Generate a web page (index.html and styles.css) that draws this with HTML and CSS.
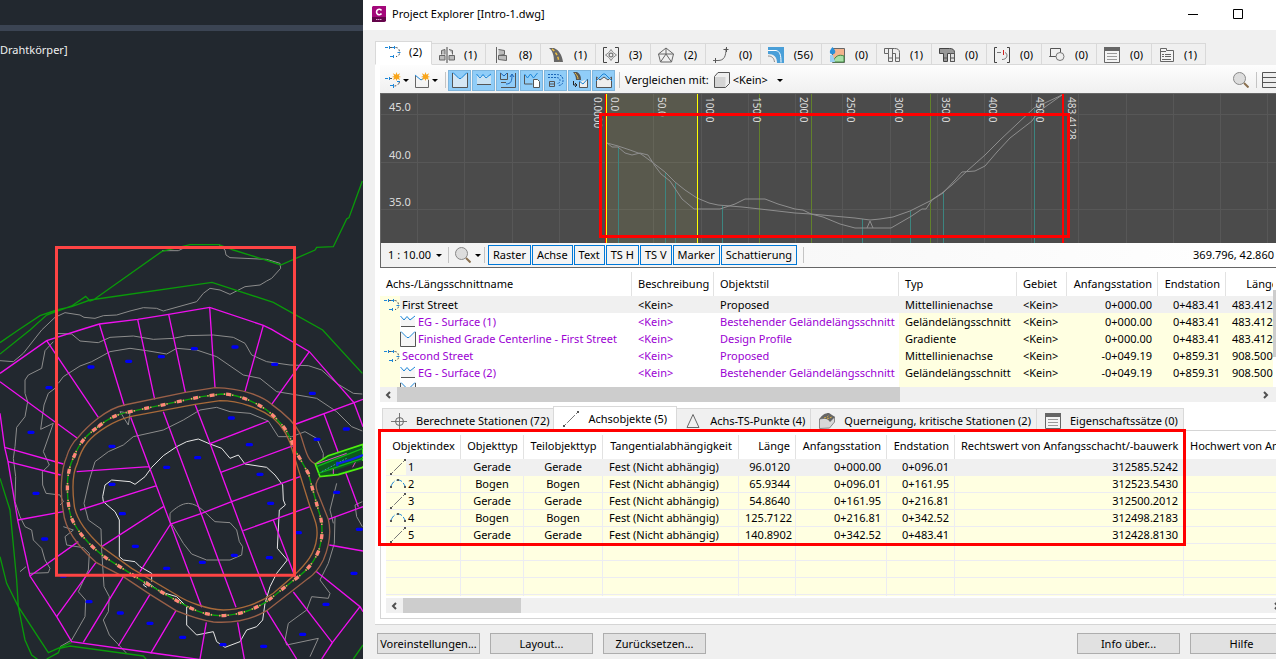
FILE: index.html
```html
<!DOCTYPE html>
<html lang="de">
<head>
<meta charset="utf-8">
<title>Project Explorer [Intro-1.dwg]</title>
<link rel="stylesheet" href="styles.css">
</head>
<body>
<svg class="sprite" aria-hidden="true">
  <symbol id="i-align" viewBox="0 0 16 16"><path d="M0 3.500h3M7 3.500h2M4.500 2v3M9.500 2v3" stroke="#1c86d8" fill="none"/><path d="M5 3.500h2M10.500 3.500c3 0 4 2 4 5s-1.500 4-3.500 4" stroke="#555" stroke-dasharray="2 2" fill="none"/><path d="M5 12.500h3M8.500 11v3M12.500 8.500h3" stroke="#1c86d8"/></symbol>
  <symbol id="i-assembly" viewBox="0 0 16 16"><path d="M8 0v16" stroke="#444"/><path d="M2.500 7.500V3.500l3.500-1v5M.5 8.500h5.500v4.500H.5zM10 2.500l3.500 1v4M10 8.500h5.500V13H10z" fill="#bbb" stroke="#666"/></symbol>
  <symbol id="i-sub" viewBox="0 0 16 16"><path d="M3.500 0v16" stroke="#666"/><path d="M5.500 2.500l6 1v4l-6 1M5.500 8.500h8v5l-8-1z" fill="#bbb" stroke="#666"/></symbol>
  <symbol id="i-road" viewBox="0 0 16 16"><path d="M1 1h5c5 2 8 7 9 14H6C6 9 5 4 1 1z" fill="#666"/><path d="M4 2c4 3 6 7 7 13" stroke="#f0c040" stroke-width="1.500" stroke-dasharray="3 2" fill="none"/></symbol>
  <symbol id="i-inter" viewBox="0 0 16 16"><path d="M4 .5H.5v15H4M12 .5h3.500v15H12" fill="none" stroke="#444"/><path d="M8 2.500l2 3 3.500 2.500-3.500 2.500-2 3-2-3L2.500 8 6 5.500z" fill="none" stroke="#888"/><circle cx="8" cy="8" r="2" fill="none" stroke="#555"/></symbol>
  <symbol id="i-tin" viewBox="0 0 16 16"><path d="M8 1l7.500 6-2 8h-11L.5 7zM8 1v6L.5 7M8 7l7.500 0M8 7l-5.500 8M8 7l5.500 8" fill="none" stroke="#666"/></symbol>
  <symbol id="i-curve" viewBox="0 0 16 16"><path d="M0 13.500h5c6 0 8-4 8-12" fill="none" stroke="#666"/><path d="M2.500 11v5M10.500 2.500h5M13.500 0v5" stroke="#555"/></symbol>
  <symbol id="i-grade" viewBox="0 0 16 16"><path d="M0 0h16v16H9C9 10 6 7 0 7z" fill="#4a9fd8"/><path d="M0 3.500h8c4 1 5 4 5 12" fill="none" stroke="#fff"/><path d="M0 9c4 0 6 2 6.500 6" fill="none" stroke="#888"/></symbol>
  <symbol id="i-water" viewBox="0 0 16 16"><path d="M3.500 1.500h12v14h-12z" fill="#f4b48e" stroke="#666"/><path d="M4 15c2-6 6-8 11-6v6z" fill="#a8e0a8" stroke="#484"/><path d="M1 8h3l2 7H1z" fill="#9cd0f4"/><path d="M3.500 0C1 3 .5 4.500 1 6s4 2 5 0S6 3 3.500 0z" fill="#2a8fd8"/></symbol>
  <symbol id="i-pipe" viewBox="0 0 16 16"><path d="M.5 1.500h10c3 0 5 1 5 4v9h-4v-8H8.500v8H4.500v-8h-4z" fill="#eee" stroke="#666"/><path d="M4.500 1.500v5M8.500 2v5M11.500 11h4M4.500 11h4" stroke="#666"/></symbol>
  <symbol id="i-pipe2" viewBox="0 0 16 16"><path d="M.5 1.500h10c3 0 5 1 5 4v9h-4v-8H8.500v8H4.500v-8h-4z" fill="#999" stroke="#444"/><path d="M11.500 6.500h4v8h-4zM11.500 11h4M5 11h3.500" fill="#ddd" stroke="#555"/></symbol>
  <symbol id="i-bracket" viewBox="0 0 16 16"><path d="M3 .5H.5v15H3M13 .5h2.500v15H13" fill="none" stroke="#444"/><path d="M3 5.500h4M11 5.500c3 1 3 7-3 7" fill="none" stroke="#777"/><path d="M9.500 3v5" stroke="#d02020"/></symbol>
  <symbol id="i-shape" viewBox="0 0 16 16"><path d="M1.500 1.500h10v8h-11M.5 9.500h1v-8" fill="none" stroke="#555"/><circle cx="11" cy="9.500" r="4" fill="#eee" stroke="#777"/></symbol>
  <symbol id="i-list" viewBox="0 0 16 16"><path d="M.5.500h15v15H.5z" fill="#f4f4f4" stroke="#666"/><path d="M0 0h16v4H0z" fill="#666"/><path d="M3 6.500h10M3 9.500h10M3 12.500h10" stroke="#999"/></symbol>
  <symbol id="i-report" viewBox="0 0 16 16"><path d="M1.500 1.500h6v2h7v11h-13z" fill="#f4f4f4" stroke="#666"/><path d="M2 4.500h5M3 7.500h2M6 7.500h6M3 9.500h2M6 9.500h6M3 12.500h9" stroke="#666"/></symbol>
  <symbol id="i-star" viewBox="0 0 10 10"><path d="M5 0l1 3 3-1.500L7.500 4.500 10 5.500 7.500 6 9 9 6 7.500 5 10 4 7.500 1 9l1.500-3L0 5.500l2.500-1L1 1.500 4 3z" fill="#f9a51a"/></symbol>
  <symbol id="i-newalign" viewBox="0 0 16 16"><path d="M0 6.500h3M4.500 5v3" stroke="#1c86d8"/><path d="M5 6.500h2M14.500 10c-1 3-3 4-5 4" stroke="#555" stroke-dasharray="3 2" fill="none"/><path d="M5 13.500h3M8.500 12v4M12 9.500h3" stroke="#1c86d8"/><use href="#i-star" x="7" width="9" height="9"/></symbol>
  <symbol id="i-newprof" viewBox="0 0 16 16"><path d="M1.500 4v11.500h13V8" fill="none" stroke="#666"/><path d="M1 3l6 5 3-2" fill="none" stroke="#1c86d8"/><use href="#i-star" x="7" width="9" height="9"/></symbol>
  <symbol id="i-prof" viewBox="0 0 16 16"><path d="M.5 1v14.500h15V1L8 7z" fill="#f2f2f2" fill-opacity=".7"/><path d="M.5 1v14.500h15V1" fill="none" stroke="#555"/><path d="M1 .5L7 6.500h2L15 .5" fill="none" stroke="#1c86d8"/></symbol>
  <symbol id="i-ground" viewBox="0 0 16 16"><path d="M1 4v8h14V4z" fill="#f0f0f0" fill-opacity=".6"/><path d="M.5 2l3.500 4 3-3.500 3 3.500L15 2" fill="none" stroke="#1c86d8"/><path d="M1 12.500h14" stroke="#555"/></symbol>
  <symbol id="i-prof3" viewBox="0 0 16 16"><path d="M.5 1v6.500h7V1M1 10.500h5M15.500 1v14.500H1" fill="none" stroke="#555"/><path d="M.5 1l3.500 3 3-3M6 12c5 0 6-3 6-9M10 5l2-3 2 3" fill="none" stroke="#1c66b8"/></symbol>
  <symbol id="i-prof4" viewBox="0 0 16 16"><path d="M.5 3v9h8" fill="none" stroke="#555"/><path d="M.5 2l3 4 3-4 3 4 4-5" fill="none" stroke="#1c86d8"/><path d="M9.500 7.500h4l2 2v6h-6z" fill="#fff" stroke="#555"/></symbol>
  <symbol id="i-align5" viewBox="0 0 16 16"><path d="M0 2.500h8c5 0 7 2 7 6s-2 5-5 5M0 5.500h7c4 0 5 1 5 3s-1 3-3 3" stroke="#1c66b8" stroke-dasharray="2 1" fill="none"/><path d="M1.500 9.500h5v5h-5zM1.500 12h5" stroke="#555" fill="none"/></symbol>
  <symbol id="i-road6" viewBox="0 0 16 16"><path d="M1 0h4c3 2 4 4 4 8H4C4 5 3 2 1 0z" fill="#555"/><path d="M3 1c2 2 3 4 3 6" stroke="#f0c040" fill="none"/><path d="M1.500 9v4H5M3 11l2 2-2 2" fill="none" stroke="#222"/><path d="M7.500 10v5.500h8V7" fill="#eee" stroke="#555"/><path d="M7 9l4 3 4.500-5" fill="none" stroke="#1c86d8"/></symbol>
  <symbol id="i-prof7" viewBox="0 0 16 16"><path d="M.5 5v10.500h15V5L12 8 8 5 4 8z" fill="#eee" stroke="#555"/><path d="M0 9l7-7h2l7 7" fill="none" stroke="#1c86d8"/></symbol>
  <symbol id="i-cube" viewBox="0 0 16 16"><path d="M4 .5h11.500v11l-4 4H.5V4.500z" fill="#eee" stroke="#555"/><path d="M1 5h10.500v10H1z" fill="#d4d4d4"/></symbol>
  <symbol id="i-zoom" viewBox="0 0 16 16"><circle cx="6.500" cy="6.500" r="6" fill="#ddd" stroke="#888"/><path d="M11 11l4.500 4.500" stroke="#8a7050" stroke-width="2"/></symbol>
  <symbol id="i-view" viewBox="0 0 16 16"><path d="M.5.500h15v15H.5zM.5 5.500h15M.5 10.500h15" fill="#eee" stroke="#555"/></symbol>
  <symbol id="i-cross" viewBox="0 0 16 16"><path d="M8.500 0v16M0 8.500h16" stroke="#777"/><circle cx="8.500" cy="8.500" r="4" fill="none" stroke="#666"/></symbol>
  <symbol id="i-line" viewBox="0 0 16 16"><path d="M1 15L15 1" stroke="#777" stroke-dasharray="3 1.500 11 1.500"/><path d="M0 14h2v2H0zM14 0h2v2h-2z" fill="#555"/></symbol>
  <symbol id="i-arc" viewBox="0 0 16 16"><path d="M1 10C3 6 5 4 8 4s5 2 7 6" fill="none" stroke="#1c86d8" stroke-dasharray="6 2"/><path d="M0 10h2v2H0zM7 3h2v2H7zM14 10h2v2h-2z" fill="#555"/></symbol>
  <symbol id="i-tri" viewBox="0 0 16 16"><path d="M8 1.500L14 14.500H2z" fill="none" stroke="#666"/></symbol>
  <symbol id="i-super" viewBox="0 0 16 16"><path d="M.5 6v9.500l10-.5 5-6V4z" fill="#d8d8d8" stroke="#888"/><path d="M0 6.500C3 2 6 0 10 0l6 4-5 5C8 5 4 5 0 6.500z" fill="#666"/><path d="M5 5c3-1 4-1 5-3M8 6l5-2" stroke="#e0b040" stroke-dasharray="2 1" fill="none"/></symbol>
</svg>

<main class="desktop">
  <section class="cad" aria-label="Zeichnung">
    <div class="cad-top"></div>
    <p class="cad-label">Drahtkörper]</p>
    <svg class="cad-plan" viewBox="0 0 1089 1977" preserveAspectRatio="xMinYMin slice" fill="none" stroke-width="3" aria-hidden="true">
      <defs><path id="axis" d="M295 290C330 260 360 250 405 242L605 200 665 192C720 192 790 225 825 262 860 295 870 320 885 360L925 430 955 540C970 580 970 620 955 665 935 710 910 730 875 755L800 815C760 840 710 857 660 857 610 855 570 835 530 812L430 755 320 685C270 650 215 590 208 540 198 480 200 420 222 380 240 335 260 315 295 290Z"/></defs>
      <g transform="translate(0 990)">
        <g stroke="#8c8c8c">
          <path d="M125 0L165-38 195-52 240-45 252-38 285-35 310-43 350-45 390-57 430-67 470-65 490-57 500-60 590-85 610-110 630-125 660-120 690-107 735-130 780-135 800-147 815-155 842-185 840-200 800-212 690-217 678-225 675-240 657-256M486-238L535-238 560-250"/>
          <path d="M0 92L40 95 70 70 125 0M165 10L215 12 240 33 295 38 330 22 400 18 460 28 520 25 560 17 640 15 700 22 735 40 755 75 800 95 870 105 925 107 965 120 1010 160 1060 190 1087 192"/>
          <path d="M160 35L135 62 125 115 85 135 75 150 75 190 83 215 75 260 50 292 45 350 40 385 47 440 45 515 60 560 75 590 95 600 100 630 125 655 135 690 150 715 145 728 90 730"/>
          <path d="M175 160L190 140 240 108 275 95 330 65 390 55 440 62 500 72 530 55 590 60 650 80 730 135 780 145 830 185 880 193 950 205 1010 245 1055 290 1087 303"/>
          <path d="M165 175L145 190 132 225 122 298 160 280 130 365 148 405 127 425 128 465 138 490 180 495 190 515 180 525"/>
          <path d="M390 250L360 245 385 285 390 250M325 365L370 345 400 320 490 300 550 270 600 240 650 232 690 245 750 250 805 273 835 320 875 320 915 305 950 325 970 370 968 410M325 365L285 395 268 450 252 520 265 570 303 597 305 660 312 770 328 800 325 845 310 870 328 915 380 970"/>
          <path d="M190 590L220 600 195 620 200 645 250 653 268 670 265 720 235 785 257 810 255 860 215 930 180 950M60 725L78 710M1005 560L1003 640 985 700 960 750 990 790 985 805 935 800 920 840 865 880 855 930 860 945 955 925 930 980"/>
          <path d="M1087 515L1065 525 1070 560 1087 590M1010 460L990 540 1000 580"/>
          <path d="M510 550C525 535 545 520 565 520 600 522 620 555 645 575L690 578 710 600 718 635 728 650 725 675 690 690 620 690 575 672 550 640 520 590 510 575Z"/>
        </g>
        <path stroke="#e6e6e6" d="M455 755L455 730 420 710 405 695 370 690 358 680 358 570 345 545 310 515 308 500 315 465 335 450 390 455 405 463 435 440 455 412 490 377 530 350 560 335 595 327 630 342 665 355 690 385 715 375 735 402 800 412 825 435 848 465 850 510 856 525 838 540 832 655 862 690 830 730 810 770 795 820 788 870 770 890 740 900 720 935 675 952 650 935 640 905 590 915 560 885 560 830 530 800 480 785 440 755 430 765 440 772"/>
        <path stroke="#0a9a0a" stroke-width="4" d="M0 72L90 0 140-45 215-72 257-101 270-87 280-90 486-236 570-256 657-256 700-240 790-212 842-195 945-240 950-248 1000-250 1040-333 1047-337 1087-447M0 38L55 0 120-43 170-60 215-70 270-90 636-143 820-83 968 0 1087 130M0 445L30 540 50 750 55 830 145 968 215 937M0 680L20 760 55 830 75 930 95 975 115 990M140 987L175 968 180 955 210 948 430 978 440 990M1060 987L1089 945"/>
        <g stroke="#f010f0" stroke-width="4">
          <path d="M0 130L140 32 240 0 298-18 413-32 506-47 629-68 790-14 815-2 928 65 1062 218 1089 208M0 250L14 352 24 395 53 570 90 738 170 860 215 935 480 972 610 990"/>
          <path d="M298-18L373 228M413-32L464 208M506-47L556 187M629-68L645 173M790-14L735 185M928 65L815 223M140 32L295 262M0 155L232 325M14 352L190 402M24 395L182 435M53 570L190 545M90 738L235 635M170 860L288 697M250 937L370 740M355 948L450 793M452 970L528 842M600 987L619 877M733 987L713 877M890 987L800 842M965 987L997 938 880 786M997 938L1080 830 948 724M1080 830L1089 845M1089 663L988 645M1089 530L985 568M1062 218L888 282M972 252L1075 530M1062 218L1089 290"/>
          <path d="M392 262L512 582 605 832M490 245L605 555 708 832M585 223L630 340 728 605 800 795M730 602L930 530M820 570L885 740M230 425L448 410M240 540L470 467M305 650L490 530M420 725L512 582 605 550 695 515 900 440M632 340L805 273M662 427L880 347"/>
        </g>
        <path stroke="#9a6048" stroke-width="4" d="M232 325C260 290 320 235 373 225L556 187 645 173C730 175 790 200 815 223 860 255 885 280 900 310 915 350 920 395 948 402M958 442C948 455 945 465 952 485L985 568C995 610 985 655 970 690 955 720 940 735 925 745L800 842C750 872 700 880 640 876 590 868 560 855 528 842L450 793 370 740 288 697C240 655 195 600 190 545 180 490 182 420 200 380 205 360 220 335 232 325"/>
        <path stroke="#a86a3a" stroke-width="4" d="M390 260L585 223 660 212C720 212 780 235 820 265 850 290 870 330 880 370L930 530C945 570 955 590 950 625 945 670 920 700 880 738L820 790C780 820 720 840 670 840 620 838 560 815 530 795L395 715 305 650C250 600 225 560 222 520 215 460 222 420 232 400 245 350 270 320 320 290 350 272 370 265 390 260Z"/>
        <use href="#axis" class="axis-line"/><use href="#axis" class="axis-marks"/><use href="#axis" class="axis-dots"/>
        <path stroke="#0000f5" stroke-width="10" stroke-linecap="round" d="M267 111h12M380 94h12M478 80h12M577 56h12M699 51h12M818 103h12M931 190h12M141 173h12M87 307h12M102 490h12M128 627h12M330 349h12M494 412h12M587 383h12M688 264h12M742 344h12M774 433h12M806 520h12M330 463h12M361 551h12M400 649h12M494 715h12M601 697h12M697 676h12M802 683h12M889 608h12M945 328h12M1033 297h12M1004 487h12M1072 598h12M1056 730h12M972 823h12M902 913h12M785 949h12M663 944h12M542 922h12M444 880h12M355 849h12M261 815h12M184 738h12"/>
        <path fill="#0c5a1c" stroke="#50f010" stroke-width="5" d="M1089 343L985 377 946 402 960 440 1015 434 1089 412V343Z"/>
        <path fill="#22282f" d="M985 428L1089 392V408L1010 430Z"/>
        <path stroke="#10b818" stroke-width="4" d="M950 410L1089 355M955 430L1089 385"/>
        <path stroke="#e050c0" d="M950 402L1040 370M1000 432v-15M1058 412l8-15"/><path stroke="#30a0b0" stroke-dasharray="6 4" d="M965 425L1040 385"/>
        <path stroke="#1020f0" stroke-width="7" d="M1010 402L1050 390 1089 375M1012 395v14"/>
        <path stroke="#ff4444" stroke-width="9" d="M169.500-247.500H883.500V735.500H169.500Z"/>
      </g>
    </svg>
  </section>

  <section class="window" aria-label="Project Explorer">
    <header class="titlebar">
      <svg class="logo" viewBox="0 0 14 16" aria-hidden="true"><path d="M1 0h13v15l-2 1H0V1z" fill="#a3077a"/><path d="M0 11h14v4l-2 1H0z" fill="#64054b"/><path d="M9.500 4.500A2.700 2.700 0 1 0 9.500 7.500" fill="none" stroke="#fff" stroke-width="1.600"/><path d="M4 13.500h6" stroke="#e0a0d0" stroke-dasharray="1.500 .5"/></svg>
      <h1>Project Explorer [Intro-1.dwg]</h1>
      <div class="winbuttons">
        <button type="button" aria-label="Minimieren"><svg width="10" height="10"><path d="M0 5.500h10" stroke="#000"/></svg></button>
        <button type="button" aria-label="Maximieren"><svg width="10" height="10"><path d="M.5.500h9v9h-9z" fill="none" stroke="#000"/></svg></button>
      </div>
    </header>

    <nav class="tabs top-tabs" role="tablist">
      <button class="tab active" role="tab" aria-selected="true"><svg class="ic"><use href="#i-align"/></svg>(2)</button>
      <button class="tab narrow" role="tab"><svg class="ic"><use href="#i-assembly"/></svg>(1)</button>
      <button class="tab" role="tab"><svg class="ic"><use href="#i-sub"/></svg>(8)</button>
      <button class="tab" role="tab"><svg class="ic"><use href="#i-road"/></svg>(1)</button>
      <button class="tab" role="tab"><svg class="ic"><use href="#i-inter"/></svg>(3)</button>
      <button class="tab" role="tab"><svg class="ic"><use href="#i-tin"/></svg>(2)</button>
      <button class="tab" role="tab"><svg class="ic"><use href="#i-curve"/></svg>(0)</button>
      <button class="tab wide" role="tab"><svg class="ic"><use href="#i-grade"/></svg>(56)</button>
      <button class="tab" role="tab"><svg class="ic"><use href="#i-water"/></svg>(0)</button>
      <button class="tab" role="tab"><svg class="ic"><use href="#i-pipe"/></svg>(1)</button>
      <button class="tab" role="tab"><svg class="ic"><use href="#i-pipe2"/></svg>(0)</button>
      <button class="tab" role="tab"><svg class="ic"><use href="#i-bracket"/></svg>(0)</button>
      <button class="tab" role="tab"><svg class="ic"><use href="#i-shape"/></svg>(0)</button>
      <button class="tab" role="tab"><svg class="ic"><use href="#i-list"/></svg>(0)</button>
      <button class="tab narrow" role="tab"><svg class="ic"><use href="#i-report"/></svg>(1)</button>
    </nav>

    <div class="page">
      <div class="toolbar">
        <button class="tool menu" aria-label="Achse erstellen"><svg class="ic"><use href="#i-newalign"/></svg></button>
        <button class="tool menu" aria-label="Längsschnitt erstellen"><svg class="ic"><use href="#i-newprof"/></svg></button>
        <span class="sep"></span>
        <div class="toggles">
          <button aria-label="Gradiente" aria-pressed="true"><svg class="ic"><use href="#i-prof"/></svg></button>
          <button aria-label="Gelände" aria-pressed="true"><svg class="ic"><use href="#i-ground"/></svg></button>
          <button aria-label="Überlagert" aria-pressed="true"><svg class="ic"><use href="#i-prof3"/></svg></button>
          <button aria-label="Datei" aria-pressed="true"><svg class="ic"><use href="#i-prof4"/></svg></button>
          <button aria-label="Achse" aria-pressed="true"><svg class="ic"><use href="#i-align5"/></svg></button>
          <button aria-label="Profilkörper" aria-pressed="true"><svg class="ic"><use href="#i-road6"/></svg></button>
          <button aria-label="Höhenzug" aria-pressed="true"><svg class="ic"><use href="#i-prof7"/></svg></button>
        </div>
        <span class="sep"></span>
        <label class="compare" for="cmp">Vergleichen mit:</label>
        <svg class="ic"><use href="#i-cube"/></svg>
        <span class="drop"><select id="cmp"><option>&lt;Kein&gt;</option></select></span>
        <span class="grow"></span>
        <button class="tool" aria-label="Suchen"><svg class="ic"><use href="#i-zoom"/></svg></button>
        <span class="sep"></span>
        <button class="tool view" aria-label="Ansicht"><svg class="ic"><use href="#i-view"/></svg></button>
      </div>

      <div class="profile">
        <svg class="chart" viewBox="381 94 895 149" preserveAspectRatio="xMinYMin slice" fill="none">
          <path stroke="#575757" d="M417.500 94v149M464.500 94v149M512.500 94v149M559.500 94v149M606.500 94v149M653.500 94v149M701.500 94v149M748.500 94v149M795.500 94v149M842.500 94v149M890.500 94v149M937.500 94v149M984.500 94v149M1031.500 94v149M1078.500 94v149M1126.500 94v149M1173.500 94v149M1220.500 94v149M1267.500 94v149M381 114.500h895M381 162.500h895M381 209.500h895"/>
          <path fill="#ffff60" fill-opacity=".08" d="M607 94h90v149h-90z"/>
          <path stroke="#3c8580" d="M618.500 148v95M665.500 172v71M675.500 183v60M722.500 206v37M862.500 219v24M910.500 211v32M943.500 193v50M1034.500 109v134"/>
          <path stroke="#62802c" d="M759.500 94v149M811.500 94v149M930.500 94v149"/>
          <path stroke="#8e8e8e" d="M607 143L618 146 630 150 641 154 652 162 665 172 675 182 685 190 697 198 709 203 718 205 742 207 760 209 795 213 811 214 855 218 870 220 880 219 893 217 910 211 930 201 942 193 952 185 967 171 985 155 1000 140 1034 108 1062 95"/>
          <path stroke="#8e8e8e" d="M607 143L612 147 618 147 625 153 632 155 640 153 648 155 655 166 661 174 670 181 682 199 694 209H720L735 204 745 199H765L778 204 795 209 803 210 811 214 823 217 840 224 855 228H891L910 217 922 209H926L932 200 943 193 955 180 962 172 975 171 985 166 997 152 1010 138 1032 121 1038 112 1062 95M867 228L870 221 873 228"/>
          <path stroke="#f00" d="M605.500 94v149"/><path stroke="#ff0" d="M606.500 94v149M697.500 94v149"/>
          <path stroke="#f00" stroke-width="2" d="M1063 94v149"/>
          <g class="chart-text">
            <g class="levels"><text x="389" y="111">45.0</text><text x="389" y="159">40.0</text><text x="389" y="206">35.0</text></g>
            <text transform="translate(594 97) rotate(90)">0.0000</text>
            <text transform="translate(611 97) rotate(90)">0.0</text>
            <text transform="translate(658 97) rotate(90)">50.0</text>
            <text transform="translate(706 97) rotate(90)">100.0</text>
            <text transform="translate(753 97) rotate(90)">150.0</text>
            <text transform="translate(800 97) rotate(90)">200.0</text>
            <text transform="translate(847 97) rotate(90)">250.0</text>
            <text transform="translate(895 97) rotate(90)">300.0</text>
            <text transform="translate(942 97) rotate(90)">350.0</text>
            <text transform="translate(989 97) rotate(90)">400.0</text>
            <text transform="translate(1036 97) rotate(90)">450.0</text>
            <text transform="translate(1068 97) rotate(90)">483.4128</text>
          </g>
          <path stroke="#f00" stroke-width="3" d="M600.500 114.500h468v122h-468z"/>
        </svg>
        <div class="statusbar">
          <span class="drop"><select aria-label="Überhöhung"><option>1 : 10.00</option></select></span>
          <span class="sep"></span>
          <button class="tool menu" aria-label="Zoom"><svg class="ic"><use href="#i-zoom"/></svg></button>
          <span class="sep"></span>
          <div class="options">
            <button aria-pressed="true">Raster</button><button aria-pressed="true">Achse</button><button aria-pressed="true">Text</button><button aria-pressed="true">TS H</button><button aria-pressed="true">TS V</button><button aria-pressed="true">Marker</button><button aria-pressed="true">Schattierung</button>
          </div>
          <span class="sep"></span>
          <span class="grow"></span>
          <output>369.796, 42.860</output>
        </div>
      </div>

      <div class="upper">
        <div class="upper-view">
          <div class="clip">
            <table class="grid tree">
              <colgroup><col class="u1"><col class="u2"><col class="u3"><col class="u4"><col class="u5"><col class="u6"><col class="u7"><col class="u8"></colgroup>
              <thead><tr><th>Achs-/Längsschnittname</th><th>Beschreibung</th><th>Objektstil</th><th>Typ</th><th>Gebiet</th><th class="r">Anfangsstation</th><th class="r">Endstation</th><th class="r">Länge</th></tr></thead>
              <tbody>
                <tr class="sel"><td class="l1"><svg class="ic"><use href="#i-align"/></svg>First Street</td><td>&lt;Kein&gt;</td><td>Proposed</td><td>Mittellinienachse</td><td>&lt;Kein&gt;</td><td class="r">0+000.00</td><td class="r">0+483.41</td><td class="r">483.4128</td></tr>
                <tr><td class="l2"><svg class="ic"><use href="#i-ground"/></svg>EG - Surface (1)</td><td>&lt;Kein&gt;</td><td>Bestehender Geländelängsschnitt</td><td>Geländelängsschnitt</td><td>&lt;Kein&gt;</td><td class="r">0+000.00</td><td class="r">0+483.41</td><td class="r">483.4128</td></tr>
                <tr><td class="l2"><svg class="ic"><use href="#i-prof"/></svg>Finished Grade Centerline - First Street</td><td>&lt;Kein&gt;</td><td>Design Profile</td><td>Gradiente</td><td>&lt;Kein&gt;</td><td class="r">0+000.00</td><td class="r">0+483.41</td><td class="r">483.4128</td></tr>
                <tr><td class="l1"><svg class="ic"><use href="#i-align"/></svg>Second Street</td><td>&lt;Kein&gt;</td><td>Proposed</td><td>Mittellinienachse</td><td>&lt;Kein&gt;</td><td class="r">-0+049.19</td><td class="r">0+859.31</td><td class="r">908.5006</td></tr>
                <tr><td class="l2"><svg class="ic"><use href="#i-ground"/></svg>EG - Surface (2)</td><td>&lt;Kein&gt;</td><td>Bestehender Geländelängsschnitt</td><td>Geländelängsschnitt</td><td>&lt;Kein&gt;</td><td class="r">-0+049.19</td><td class="r">0+859.31</td><td class="r">908.5006</td></tr>
                <tr><td class="l2"><svg class="ic"><use href="#i-prof"/></svg></td><td></td><td></td><td></td><td></td><td></td><td></td><td></td></tr>
              </tbody>
            </table>
          </div>
          <div class="vscroll"><div class="vthumb"></div></div>
        </div>
        <div class="hscroll"><svg class="arrow" viewBox="0 0 8 8"><path d="M6 1L3 4l3 3"/></svg><div class="thumb wide-thumb"></div><span class="grow"></span><svg class="arrow end" viewBox="0 0 8 8"><path d="M2 1l3 3-3 3"/></svg></div>
      </div>

      <nav class="tabs low-tabs" role="tablist">
        <button class="tab" role="tab"><svg class="ic"><use href="#i-cross"/></svg>Berechnete Stationen (72)</button>
        <button class="tab active" role="tab" aria-selected="true"><svg class="ic"><use href="#i-line"/></svg>Achsobjekte (5)</button>
        <button class="tab" role="tab"><svg class="ic"><use href="#i-tri"/></svg>Achs-TS-Punkte (4)</button>
        <button class="tab" role="tab"><svg class="ic"><use href="#i-super"/></svg>Querneigung, kritische Stationen (2)</button>
        <button class="tab" role="tab"><svg class="ic"><use href="#i-list"/></svg>Eigenschaftssätze (0)</button>
      </nav>
      <div class="lower">
        <div class="lower-clip">
          <table class="grid items">
            <colgroup><col class="c1"><col class="c2"><col class="c3"><col class="c4"><col class="c5"><col class="c6"><col class="c7"><col class="c8"><col class="c9"></colgroup>
            <thead><tr><th>Objektindex</th><th>Objekttyp</th><th>Teilobjekttyp</th><th>Tangentialabhängigkeit</th><th class="r">Länge</th><th class="r">Anfangsstation</th><th class="r">Endstation</th><th class="r">Rechtswert von Anfangsschacht/-bauwerk</th><th>Hochwert von Anfangsschacht</th></tr></thead>
            <tbody>
              <tr class="sel"><td><svg class="ic"><use href="#i-line"/></svg>1</td><td class="m">Gerade</td><td class="m">Gerade</td><td>Fest (Nicht abhängig)</td><td class="r">96.0120</td><td class="r">0+000.00</td><td class="r">0+096.01</td><td class="r">312585.5242</td><td></td></tr>
              <tr><td><svg class="ic"><use href="#i-arc"/></svg>2</td><td class="m">Bogen</td><td class="m">Bogen</td><td>Fest (Nicht abhängig)</td><td class="r">65.9344</td><td class="r">0+096.01</td><td class="r">0+161.95</td><td class="r">312523.5430</td><td></td></tr>
              <tr><td><svg class="ic"><use href="#i-line"/></svg>3</td><td class="m">Gerade</td><td class="m">Gerade</td><td>Fest (Nicht abhängig)</td><td class="r">54.8640</td><td class="r">0+161.95</td><td class="r">0+216.81</td><td class="r">312500.2012</td><td></td></tr>
              <tr><td><svg class="ic"><use href="#i-arc"/></svg>4</td><td class="m">Bogen</td><td class="m">Bogen</td><td>Fest (Nicht abhängig)</td><td class="r">125.7122</td><td class="r">0+216.81</td><td class="r">0+342.52</td><td class="r">312498.2183</td><td></td></tr>
              <tr><td><svg class="ic"><use href="#i-line"/></svg>5</td><td class="m">Gerade</td><td class="m">Gerade</td><td>Fest (Nicht abhängig)</td><td class="r">140.8902</td><td class="r">0+342.52</td><td class="r">0+483.41</td><td class="r">312428.8130</td><td></td></tr>
              <tr><td></td><td></td><td></td><td></td><td></td><td></td><td></td><td></td><td></td></tr>
              <tr><td></td><td></td><td></td><td></td><td></td><td></td><td></td><td></td><td></td></tr>
              <tr><td></td><td></td><td></td><td></td><td></td><td></td><td></td><td></td><td></td></tr>
              <tr><td></td><td></td><td></td><td></td><td></td><td></td><td></td><td></td><td></td></tr>
            </tbody>
          </table>
        </div>
        <div class="hscroll"><svg class="arrow" viewBox="0 0 8 8"><path d="M6 1L3 4l3 3"/></svg><div class="thumb short-thumb"></div><span class="grow"></span><svg class="arrow cut" viewBox="0 0 8 8"><path d="M2 1l3 3-3 3"/></svg></div>
        <div class="mark"></div>
      </div>
    </div>

    <footer class="footer">
      <button>Voreinstellungen...</button><button>Layout...</button><button>Zurücksetzen...</button>
      <span class="grow"></span>
      <button>Info über...</button><button class="help">Hilfe</button>
    </footer>
  </section>
</main>
</body>
</html>
```
FILE: styles.css
```css
* { box-sizing: border-box; }
body { margin: 0; overflow: hidden; font: 11px/16px "Noto Sans", "Open Sans", sans-serif; color: #000; }
button, select { font: inherit; color: inherit; border: 0; background: none; padding: 0; margin: 0; border-radius: 0; white-space: nowrap; }
.sprite { position: absolute; width: 0; height: 0; }
.ic { width: 16px; height: 16px; flex: none; display: block; }
.grow { flex: 1; }
.desktop { display: grid; grid-template-columns: minmax(0, 363fr) minmax(0, 913fr); height: 100vh; }

/* drawing area */
.cad { position: relative; background: #22282f; overflow: hidden; padding-top: 25px; }
.cad-top { height: 6px; background: #3b4453; }
.cad-label { margin: 11px 0 0; color: #f0f0f0; }
.cad-plan { position: absolute; inset: 0; width: 100%; height: 100%; }
.axis-line { stroke: #0aa00a; stroke-width: 4px; }
.axis-marks { stroke: #ff8878; stroke-width: 10px; stroke-dasharray: 15 35; }
.axis-dots { stroke: #ff8878; stroke-width: 5px; stroke-dasharray: 4 21; stroke-dashoffset: 7; }

/* dialog window */
.window { display: flex; flex-direction: column; min-width: 0; background: #f0f0f0; overflow: hidden; }
.titlebar { display: flex; align-items: center; height: 30px; padding: 0 33px 2px 9px; background: #fff; flex: none; }
.logo { width: 14px; height: 16px; margin-right: 6px; }
.titlebar h1 { margin: 0; font-size: 11px; font-weight: 400; flex: 1; }
.winbuttons { display: flex; gap: 35px; }
.winbuttons svg { display: block; }

.tabs { display: flex; align-items: flex-end; flex: none; }
.tab { display: flex; align-items: center; justify-content: space-between; border: 1px solid #d9d9d9; border-left-width: 0; background: #f0f0f0; }
.tab.active { background: #fff; border-bottom-color: #fff; border-left-width: 1px; }
.top-tabs { height: 35px; padding-left: 12px; }
.top-tabs .tab { width: 55px; height: 22px; padding: 1px 8px 0 7px; }
.top-tabs .tab.active { width: 57px; height: 24px; padding: 0 9px 2px; }
.top-tabs .tab.wide { width: 61px; }
.top-tabs .tab.narrow { width: 54px; }

.page { display: flex; flex-direction: column; flex: 1; min-height: 0; margin-left: 12px; padding-left: 5px; background: #fff; border-bottom: 1px solid #d5d5d5; }
.toolbar { display: flex; align-items: center; height: 28px; gap: 5px; padding: 2px 0 0 5px; background: linear-gradient(#fdfdfd, #f0f0f0); flex: none; overflow: hidden; }
.tool { flex: none; }
.view { margin-right: -2px; }
.menu { display: flex; align-items: center; gap: 2px; }
.menu::after, .drop::after { content: ""; border: 3px solid transparent; border-top-color: #000; border-bottom: 0; }
.sep { width: 1px; height: 16px; background: #c4c4c4; flex: none; margin: 0 1px; }
.toolbar > .sep { margin: 0 0 0 2px; }
.toggles { display: flex; gap: 1px; margin: 0 -3px; }
.toggles button { width: 23px; height: 21px; padding: 1px 2px; background: #90cdf8; border: 1px solid #7fb5dc; display: flex; justify-content: center; }
.drop { display: flex; align-items: center; gap: 8px; }
.drop select { appearance: none; }
.toolbar > .drop { margin-left: -2px; }

.profile { border: 1px solid #666; border-right: 0; flex: none; }
.chart { display: block; width: 100%; height: auto; background: #4b4b4b; }
.chart-text { font-size: 10px; fill: #dcdcdc; }
.levels { font-size: 11px; }
.statusbar { display: flex; align-items: center; height: 24px; gap: 5px; padding: 0 2px 0 7px; background: linear-gradient(90deg, #f2f2f2, #fff); }
.statusbar .drop, .statusbar .menu { gap: 4px; }
.statusbar .menu { margin-right: -3px; }
.options { display: flex; gap: 1px; margin-left: -3px; }
.options button { height: 20px; padding: 0 4px; border: 1px solid #0078d7; background: #f4f4f4; }

/* tables */
.grid { border-collapse: separate; border-spacing: 0; table-layout: fixed; line-height: 16px; }
.grid th { height: 24px; padding: 0 5px 0 6px; font-weight: 400; text-align: left; border-right: 1px solid #e2e2e2; white-space: nowrap; }
.grid td { height: 17px; padding: 0 6px; white-space: nowrap; overflow: hidden; }
.grid .r { text-align: right; }
.grid .m { text-align: center; }
.grid td .ic { display: inline-block; vertical-align: top; margin-right: 2px; }

.upper { margin-top: 4px; flex: none; }
.upper-view { display: flex; height: 115px; overflow: hidden; }
.clip { flex: 1; min-width: 0; overflow: hidden; }
.vscroll { flex: none; width: 3px; padding-top: 18px; background: #fff; }
.vthumb { height: 67px; background: #cdcdcd; }
.tree { width: 904px; }
.u1 { width: 252px; } .u2 { width: 82px; } .u3 { width: 185px; } .u4 { width: 118px; }
.u5 { width: 50px; } .u6 { width: 91px; } .u7 { width: 68px; } .u8 { width: 58px; }
.tree tr:not(.sel) td { color: #9b00d3; }
.tree tr:not(.sel) td:nth-child(n+4) { color: #000; background: #ffffe1; }
.tree .sel td { background: #f0f0f0; }
.tree td:first-child { background: linear-gradient(90deg, #ffffe1 20px, transparent 20px); }
.tree .sel td:first-child { background: linear-gradient(90deg, #ffffe1 20px, #f0f0f0 20px); }
.tree td.l1 { padding-left: 4px; }
.tree td.l2 { padding-left: 20px; }

.hscroll { display: flex; align-items: center; height: 15px; background: #f0f0f0; flex: none; overflow: hidden; }
.arrow { width: 8px; height: 8px; margin: 0 5px 0 4px; fill: none; stroke: #505050; stroke-width: 2px; flex: none; }
.arrow.end { margin: 0 6px 0 4px; }
.arrow.cut { margin: 0 -5px 0 0; }
.thumb { height: 15px; background: #cdcdcd; flex: none; }
.wide-thumb { width: 503px; }
.short-thumb { width: 118px; }

.low-tabs { height: 28px; padding-left: 2px; }
.low-tabs .tab { height: 22px; padding: 3px 5px 0 8px; gap: 9px; }
.low-tabs .tab:first-child { border-left-width: 1px; border-right-width: 0; padding-right: 4px; }
.low-tabs .tab.active { height: 24px; padding: 1px 9px 0; }
.lower { position: relative; display: flex; flex-direction: column; flex: 1; min-height: 0; margin-bottom: 5px; padding: 4px 0 5px 5px; border: 1px solid #d5d5d5; border-right: 0; }
.lower-clip { flex: 1; min-height: 0; overflow: hidden; margin-bottom: 2px; }
.items { width: 938px; }
.items thead th { text-align: center; padding-bottom: 2px; }
.items thead th.r { text-align: right; }
.c1 { width: 75px; } .c2 { width: 63px; } .c3 { width: 79px; } .c4 { width: 136px; } .c5 { width: 57px; }
.c6 { width: 91px; } .c7 { width: 68px; } .c8 { width: 229px; } .c9 { width: 140px; }
.items thead th:last-child { text-align: left; }
.items td { background: #ffffe1; border-right: 1px solid #ececf2; border-bottom: 1px solid #ececf2; }
.items td.r { padding-right: 5px; }
.items td:first-child { padding-left: 4px; }
.items .sel td { background: #f0f0f0; border-color: #f0f0f0; }
.items .sel td:first-child { background: linear-gradient(90deg, #ffffe1 20px, #f0f0f0 20px); }
.mark { position: absolute; top: -2px; left: -3px; width: 808px; height: 117px; border: 3px solid #f00; }

.footer { display: flex; gap: 10px; padding: 8px 0 5px 14px; flex: none; }
.footer button { width: 103px; height: 21px; border: 1px solid #adadad; background: #e1e1e1; flex: none; }
.footer .help { margin-right: -17px; }
```
